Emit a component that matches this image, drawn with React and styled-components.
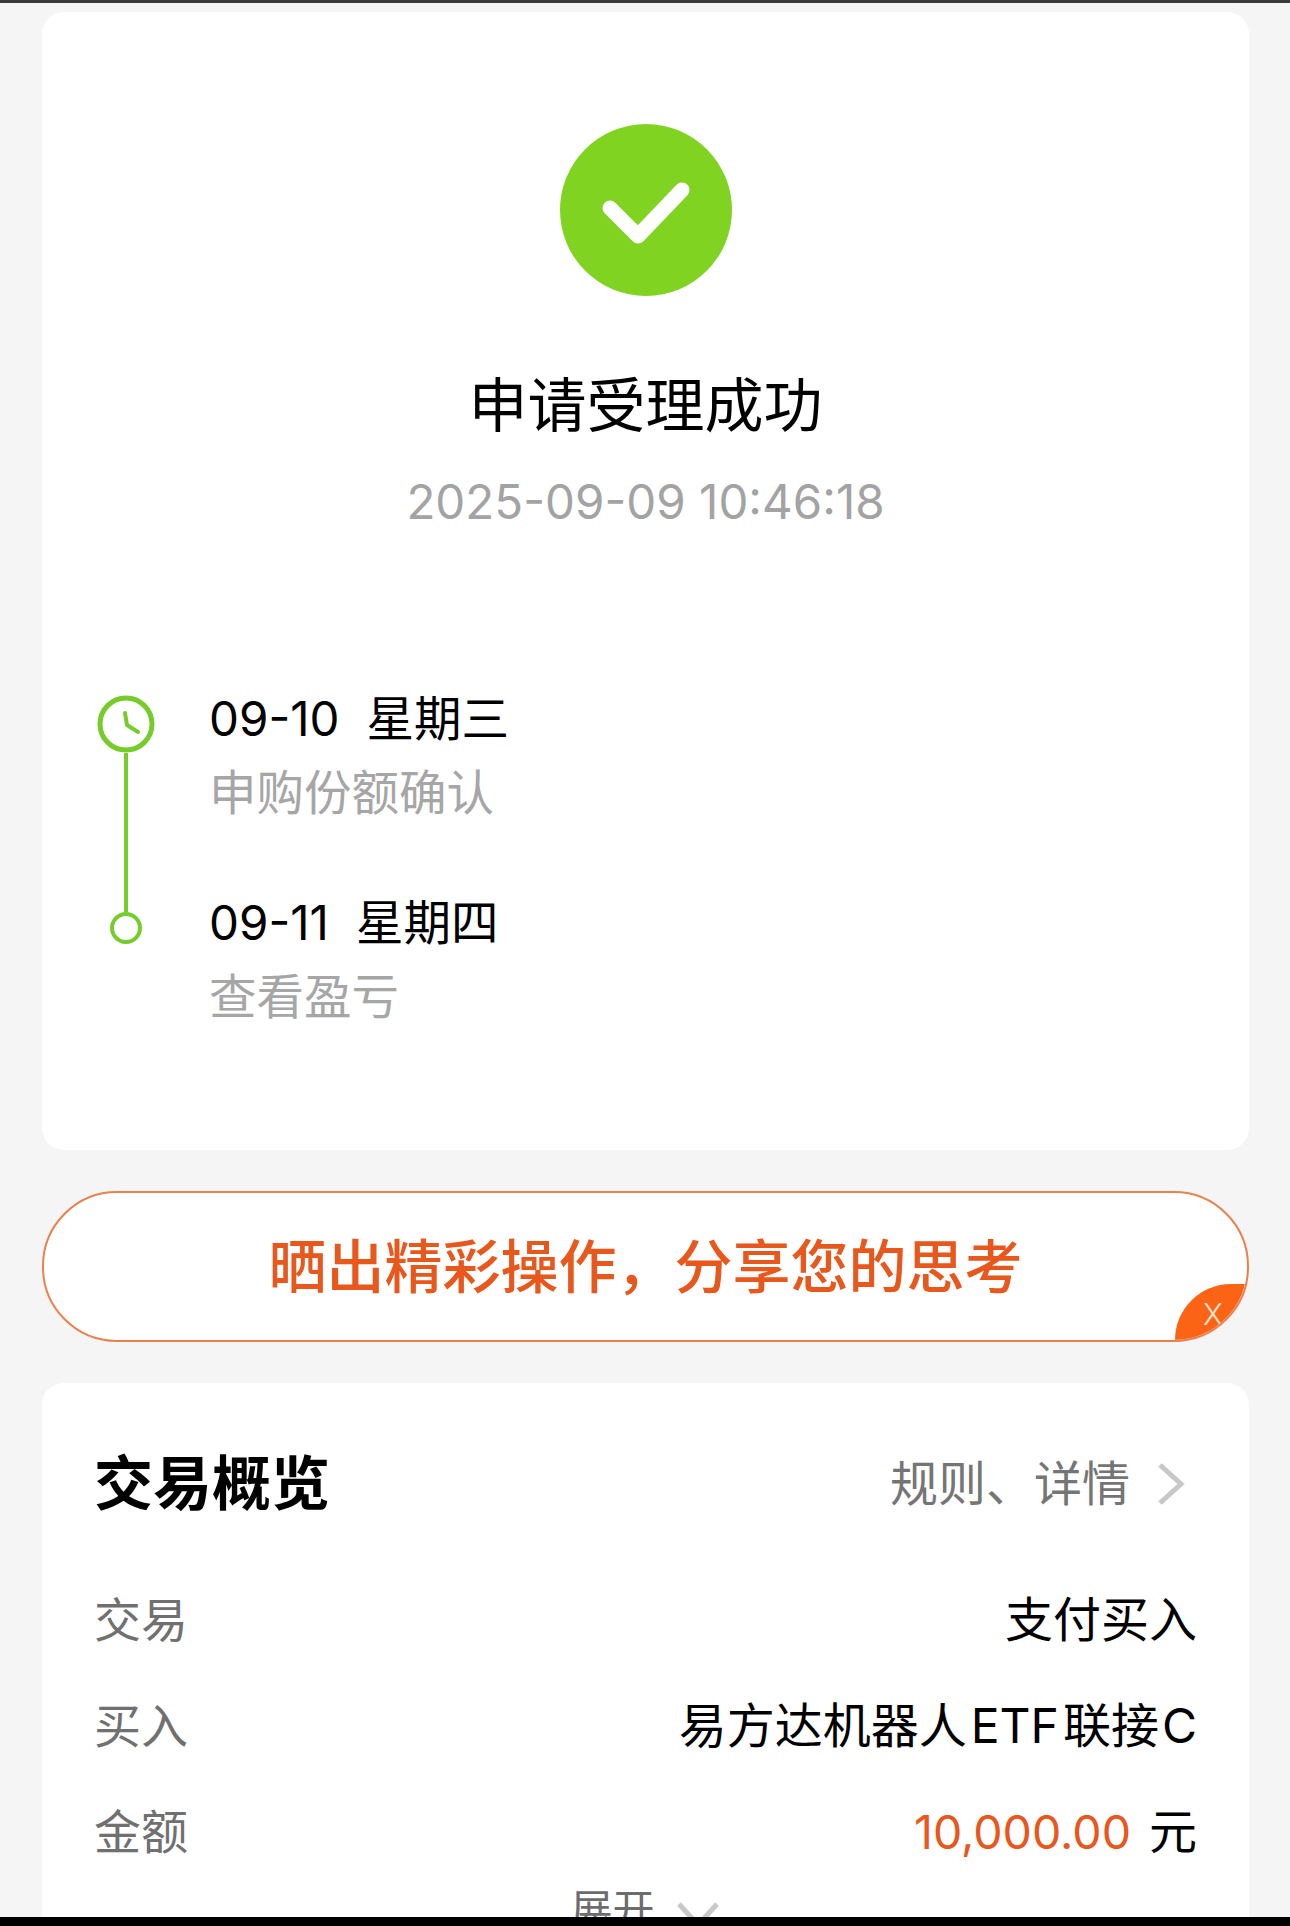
import React from 'react';
import styled, {createGlobalStyle} from 'styled-components';

const GREEN = "#76cc2b";
const ORANGE = "#e8571c";

const GlobalStyle = createGlobalStyle`
  html, body {
    margin: 0;
    padding: 0;
    background: #f5f5f5;
  }
  * {
    box-sizing: border-box;
  }
`;

const Page = styled.div`
  display: flex;
  flex-direction: column;
  width: 1290px;
  height: 1926px;
  overflow: hidden;
  background: #f5f5f5;
  color: #000;
  font-family: "Inter", "Noto Sans CJK SC", sans-serif;
`;
const TopStrip = styled.div`
  flex: 0 0 3px;
  background: #3b3b3b;
`;
const Content = styled.div`
  flex: 1;
  min-height: 0;
  overflow: hidden;
  display: flex;
  flex-direction: column;
  gap: 41px;
  padding: 9px 41px 0 42px;
`;
const BottomBar = styled.div`
  flex: 0 0 9px;
  background: #000;
`;
const Card = styled.section`
  background: #fff;
  border-radius: 22px;
`;
const StatusCard = styled(Card)`
  flex: 0 0 1138px;
  display: flex;
  flex-direction: column;
  align-items: center;
  padding-top: 112px;
`;
const StatusBadge = styled.svg`
  width: 172px;
  height: 172px;
  display: block;
`;
const StatusTitle = styled.h1`
  margin: 75px 0 0;
  font-size: 59px;
  line-height: 70px;
  font-weight: 400;
`;
const StatusTime = styled.div`
  margin-top: 32px;
  font-size: 47.5px;
  line-height: 58px;
  color: #a3a3a3;
`;
const Timeline = styled.div`
  align-self: stretch;
  display: grid;
  grid-template-columns: 56px 1fr;
  column-gap: 55px;
  margin-top: 160px;
  padding-left: 56px;
`;
const Rail = styled.div`
  display: flex;
  flex-direction: column;
  align-items: center;
  padding-top: 4px;
`;
const ClockIcon = styled.svg`
  width: 58px;
  height: 58px;
  flex: none;
  display: block;
`;
const RailLine = styled.div`
  width: 4px;
  height: 159px;
  background: ${GREEN};
`;
const EndDot = styled.div`
  width: 32px;
  height: 32px;
  flex: none;
  border: 4px solid ${GREEN};
  border-radius: 50%;
`;
const Steps = styled.div`
  display: flex;
  flex-direction: column;
  gap: 75px;
`;
const Step = styled.div`
  display: flex;
  flex-direction: column;
  gap: 19px;
`;
const StepDate = styled.div`
  display: flex;
  gap: 27px;
  font-size: 47.5px;
  line-height: 55px;
`;
const StepNote = styled.div`
  font-size: 47.5px;
  line-height: 55px;
  color: #a6a6a6;
`;
const ShareBanner = styled.div`
  position: relative;
  flex: 0 0 151px;
  display: flex;
  align-items: center;
  justify-content: center;
  overflow: hidden;
  background: #fff;
  border: 2px solid #e9814f;
  border-radius: 75px;
  color: ${ORANGE};
  font-size: 58px;
  line-height: 70px;
  font-weight: 500;
`;
const CloseCorner = styled.div`
  position: absolute;
  right: 0;
  bottom: 0;
  width: 72px;
  height: 56px;
  display: flex;
  align-items: center;
  justify-content: center;
  padding: 4px 0 0 4px;
  background: #fb6414;
  border-top-left-radius: 56px 56px;
  color: #ffe6d4;
  font-size: 30px;
  font-weight: 300;
`;
const SummaryCard = styled(Card)`
  flex: 1;
  min-height: 0;
  display: flex;
  flex-direction: column;
  padding: 66px 52px 0;
  border-bottom-left-radius: 0;
  border-bottom-right-radius: 0;
`;
const SummaryHeader = styled.div`
  display: flex;
  align-items: center;
  justify-content: space-between;
  height: 70px;
  padding-right: 11px;
`;
const SummaryTitle = styled.h2`
  margin: 0;
  font-size: 59px;
  line-height: 70px;
  font-weight: 700;
`;
const DetailLink = styled.div`
  display: flex;
  align-items: center;
  gap: 26px;
  font-size: 48px;
  line-height: 58px;
  color: #757575;
`;
const Chevron = styled.svg`
  width: 30px;
  height: 46px;
  display: block;
`;
const Rows = styled.div`
  display: flex;
  flex-direction: column;
  gap: 50px;
  margin-top: 73px;
`;
const Row = styled.div`
  display: flex;
  align-items: center;
  justify-content: space-between;
  height: 56px;
  font-size: 48px;
  line-height: 56px;
`;
const RowLabel = styled.span`
  color: #707070;
  font-size: 47px;
`;
const RowValue = styled.span`
  display: flex;
  align-items: center;
  gap: 18px;
`;
const FundName = styled.span`
  display: block;
`;
const Latin = styled.span`
  margin-left: ${props => props.gap}px;
  margin-right: ${props => props.trail}px;
`;
const Amount = styled.span`
  color: ${ORANGE};
  font-size: 46.5px;
`;
const Expand = styled.div`
  display: flex;
  align-items: center;
  justify-content: center;
  gap: 20px;
  margin-top: 22px;
  height: 56px;
  font-size: 42px;
  line-height: 56px;
  color: #6c6c6c;
`;
const ExpandChevron = styled.svg`
  width: 46px;
  height: 30px;
  display: block;
  margin-top: 10px;
`;

const App = () => {
    return (
        <Page>
            <GlobalStyle/>
            <TopStrip/>
            <Content>
                <StatusCard>
                    <StatusBadge viewBox="0 0 172 172">
                        <circle cx="86" cy="86" r="86" fill="#80d321"/>
                        <path d="M50 84 L78 112 L122 66" fill="none" stroke="#fff" strokeWidth="15" strokeLinecap="round" strokeLinejoin="round"/>
                    </StatusBadge>
                    <StatusTitle>申请受理成功</StatusTitle>
                    <StatusTime>2025-09-09 10:46:18</StatusTime>
                    <Timeline>
                        <Rail>
                            <ClockIcon viewBox="0 0 58 58">
                                <circle cx="29" cy="29" r="26" fill="none" stroke={GREEN} strokeWidth="5"/>
                                <path d="M28 18 L30 30 L41 37" fill="none" stroke={GREEN} strokeWidth="4" strokeLinecap="round" strokeLinejoin="round"/>
                            </ClockIcon>
                            <RailLine/>
                            <EndDot/>
                        </Rail>
                        <Steps>
                            <Step>
                                <StepDate><span>09-10</span><span>星期三</span></StepDate>
                                <StepNote>申购份额确认</StepNote>
                            </Step>
                            <Step>
                                <StepDate><span>09-11</span><span>星期四</span></StepDate>
                                <StepNote>查看盈亏</StepNote>
                            </Step>
                        </Steps>
                    </Timeline>
                </StatusCard>
                <ShareBanner>
                    晒出精彩操作，分享您的思考
                    <CloseCorner>X</CloseCorner>
                </ShareBanner>
                <SummaryCard>
                    <SummaryHeader>
                        <SummaryTitle>交易概览</SummaryTitle>
                        <DetailLink>
                            规则、详情
                            <Chevron viewBox="0 0 30 46">
                                <path d="M4 4 L25 23 L4 42" fill="none" stroke="#c8c8c8" strokeWidth="5"/>
                            </Chevron>
                        </DetailLink>
                    </SummaryHeader>
                    <Rows>
                        <Row><RowLabel>交易</RowLabel><RowValue>支付买入</RowValue></Row>
                        <Row>
                            <RowLabel>买入</RowLabel>
                            <RowValue>
                                <FundName>易方达机器人<Latin gap={4} trail={4}>ETF</Latin>联接<Latin gap={3} trail={0}>C</Latin></FundName>
                            </RowValue>
                        </Row>
                        <Row><RowLabel>金额</RowLabel><RowValue><Amount>10,000.00</Amount>元</RowValue></Row>
                    </Rows>
                    <Expand>
                        展开
                        <ExpandChevron viewBox="0 0 46 30">
                            <path d="M4 4 L23 25 L42 4" fill="none" stroke="#c8c8c8" strokeWidth="5"/>
                        </ExpandChevron>
                    </Expand>
                </SummaryCard>
            </Content>
            <BottomBar/>
        </Page>
    );
};

export default App;
